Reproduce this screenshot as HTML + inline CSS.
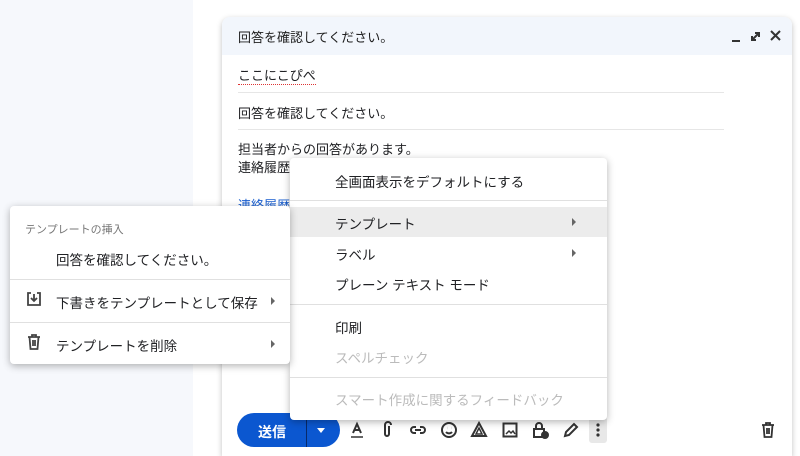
<!DOCTYPE html>
<html><head><meta charset="utf-8"><style>
*{margin:0;padding:0;box-sizing:border-box}
html,body{width:800px;height:456px;overflow:hidden}
body{background:#f6f8fc;font-family:"Liberation Sans","Noto Sans CJK JP",sans-serif;position:relative;color:#202124}
.abs{position:absolute}
.strip{left:193px;top:0;width:607px;height:456px;background:#fff}
.comp{left:222px;top:17px;width:570px;height:439px;background:#fff;border-radius:8px 8px 0 0;box-shadow:0 2px 6px rgba(0,0,0,.25)}
.hdr{left:0;top:0;width:570px;height:38px;background:#f2f6fc;border-radius:8px 8px 0 0;font-size:13px;color:#1f1f1f;padding:10px 16px}
.t{font-size:13px;white-space:nowrap}
.line{height:1px;background:#e6e6e6}
.menu{background:#fff;border-radius:4px;box-shadow:0 2px 8px rgba(0,0,0,.3)}
.mi{position:absolute;font-size:13.5px;white-space:nowrap;color:#202124}
.sep{position:absolute;height:1px;background:#e0e0e0;left:0;right:0}
.arr{position:absolute;width:0;height:0;border-top:4px solid transparent;border-bottom:4px solid transparent;border-left:4px solid #666}
svg.ic{position:absolute;top:421px;width:18px;height:18px;fill:none;stroke:#333;stroke-width:2}
</style></head><body>
<div class="abs strip"></div>
<div class="abs comp">
 <div class="abs hdr">回答を確認してください。
  <svg class="abs" style="left:508px;top:12px" width="60" height="14" fill="none" stroke="#333" stroke-width="2"><path d="M2 12h8"/><path d="M22 11l7-7M22 7v4h4M29 8V4h-4"/><path d="M41 2l9 9M50 2l-9 9"/></svg>
 </div>
 <div class="abs t" style="left:16px;top:48px;border-bottom:1px dotted #d33">ここにこぴぺ</div>
 <div class="abs line" style="left:16px;top:75px;width:486px"></div>
 <div class="abs t" style="left:16px;top:86px">回答を確認してください。</div>
 <div class="abs line" style="left:16px;top:112px;width:486px"></div>
 <div class="abs t" style="left:16px;top:124px;line-height:18px">担当者からの回答があります。<br>連絡履歴</div>
 <div class="abs t" style="left:16px;top:178px;color:#1a5fd0">連絡履歴</div>
</div>
<div class="abs" style="left:237px;top:413px;width:103px;height:34px;background:#0b57d0;border-radius:17px"></div>
<div class="abs" style="left:306px;top:413px;width:1px;height:34px;background:#082a6a"></div>
<div class="abs" style="left:258px;top:422px;color:#fff;font-size:14px;font-weight:bold">送信</div>
<div class="abs" style="left:317px;top:428px;border-left:4px solid transparent;border-right:4px solid transparent;border-top:5px solid #fff"></div>
<svg class="ic" style="left:348px"><path d="M5 12l4-9 4 9M6.5 9h5"/><path d="M3 16h12" stroke-width="1.5"/></svg>
<svg class="ic" style="left:378px"><path d="M11 5v8a2 2 0 0 1-4 0V4a3 3 0 0 1 6 0"/></svg>
<svg class="ic" style="left:409px"><path d="M7 6H5a3 3 0 0 0 0 6h2M11 6h2a3 3 0 0 1 0 6h-2M6 9h6"/></svg>
<svg class="ic" style="left:440px"><circle cx="9" cy="9" r="7"/><path d="M6 11a4 4 0 0 0 6 0"/><path d="M7 7h.1M11 7h.1" stroke-width="2.5"/></svg>
<svg class="ic" style="left:470px"><path d="M9 2l7 13H2z"/><path d="M9 7l3 6H6z" stroke-width="1.5"/></svg>
<svg class="ic" style="left:501px"><rect x="2.5" y="2.5" width="13" height="13"/><path d="M5 13l3-3 2 2 2-2 2 3" stroke-width="1.5"/></svg>
<svg class="ic" style="left:531px"><rect x="3" y="8" width="10" height="8"/><path d="M5 8V5a3 3 0 0 1 6 0v3"/><circle cx="14" cy="14" r="3" fill="#333"/></svg>
<svg class="ic" style="left:561px"><path d="M4 15l1-4 8-8 3 3-8 8z"/></svg>
<div class="abs" style="left:589px;top:417px;width:18px;height:26px;background:#e8e8e8;border-radius:3px"></div>
<svg class="ic" style="left:589px;stroke:none;fill:#333"><circle cx="9" cy="4" r="1.6"/><circle cx="9" cy="9" r="1.6"/><circle cx="9" cy="14" r="1.6"/></svg>
<svg class="ic" style="left:759px"><path d="M3 4h12M7 4V2h4v2M4.5 4l1 12h7l1-12M8 7v6M10 7v6" stroke-width="1.8"/></svg>
<div class="abs menu" style="left:290px;top:158px;width:317px;height:262px">
 <div class="mi" style="left:45px;top:13px">全画面表示をデフォルトにする</div>
 <div class="sep" style="top:42px"></div>
 <div class="abs" style="left:0;top:49px;width:317px;height:30px;background:#ececec"></div>
 <div class="mi" style="left:45px;top:55px">テンプレート</div><div class="arr" style="left:282px;top:60px"></div>
 <div class="mi" style="left:45px;top:86px">ラベル</div><div class="arr" style="left:282px;top:91px"></div>
 <div class="mi" style="left:45px;top:116px">プレーン テキスト モード</div>
 <div class="sep" style="top:146px"></div>
 <div class="mi" style="left:45px;top:159px">印刷</div>
 <div class="mi" style="left:45px;top:189px;color:#bbb">スペルチェック</div>
 <div class="sep" style="top:219px"></div>
 <div class="mi" style="left:45px;top:231px;color:#bbb">スマート作成に関するフィードバック</div>
</div>
<div class="abs menu" style="left:10px;top:206px;width:280px;height:158px">
 <div class="mi" style="left:15px;top:15px;font-size:11px;color:#777">テンプレートの挿入</div>
 <div class="mi" style="left:46px;top:43px">回答を確認してください。</div>
 <div class="sep" style="top:73px"></div>
 <svg class="abs" style="left:16px;top:85px" width="16" height="16" fill="none" stroke="#444" stroke-width="1.8"><path d="M5 2H2v12h12V2h-3M8 3v7M5 7l3 3 3-3"/></svg>
 <div class="mi" style="left:46px;top:86px">下書きをテンプレートとして保存</div><div class="arr" style="left:261px;top:91px"></div>
 <div class="sep" style="top:116px"></div>
 <svg class="abs" style="left:16px;top:128px" width="16" height="16" fill="none" stroke="#444" stroke-width="1.8"><path d="M2 3h12M6 3V1h4v2M3.5 3l1 12h7l1-12M7 6v6M9 6v6"/></svg>
 <div class="mi" style="left:46px;top:129px">テンプレートを削除</div><div class="arr" style="left:261px;top:134px"></div>
</div>
</body></html>
